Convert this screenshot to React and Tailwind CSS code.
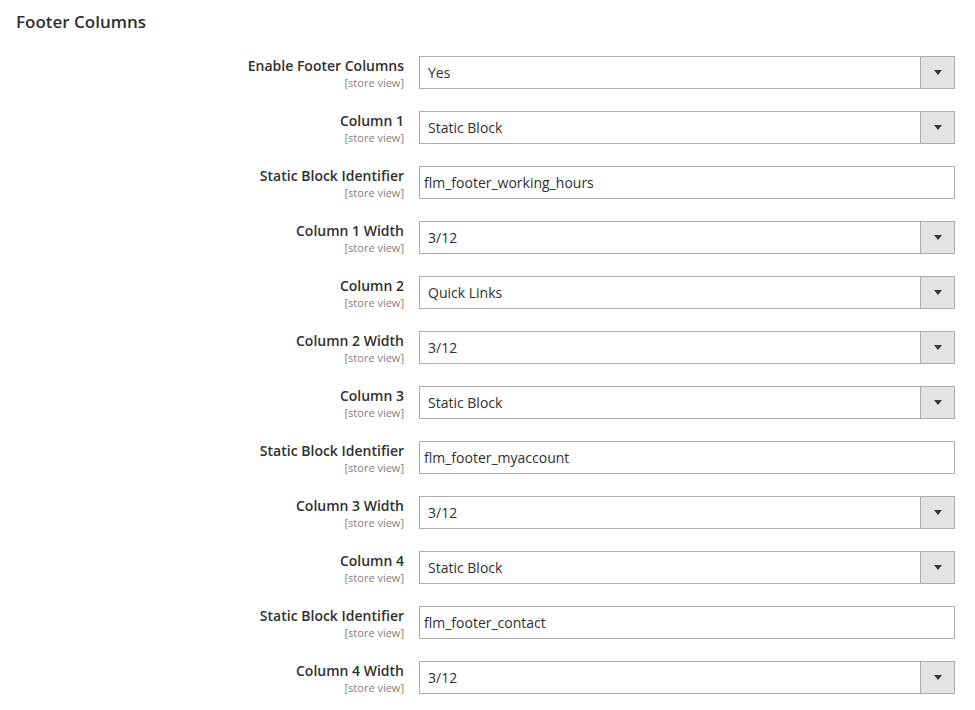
import React from 'react';

const rows = [
  { label: 'Enable Footer Columns', type: 'select', value: 'Yes' },
  { label: 'Column 1', type: 'select', value: 'Static Block' },
  { label: 'Static Block Identifier', type: 'text', value: 'flm_footer_working_hours' },
  { label: 'Column 1 Width', type: 'select', value: '3/12' },
  { label: 'Column 2', type: 'select', value: 'Quick Links' },
  { label: 'Column 2 Width', type: 'select', value: '3/12' },
  { label: 'Column 3', type: 'select', value: 'Static Block' },
  { label: 'Static Block Identifier', type: 'text', value: 'flm_footer_myaccount' },
  { label: 'Column 3 Width', type: 'select', value: '3/12' },
  { label: 'Column 4', type: 'select', value: 'Static Block' },
  { label: 'Static Block Identifier', type: 'text', value: 'flm_footer_contact' },
  { label: 'Column 4 Width', type: 'select', value: '3/12' },
];

function Field({ type, value }) {
  if (type === 'text') {
    return (
      <div className="w-[536px] h-[33px] border border-[#adadad] bg-white flex items-center pl-[4px] text-[14px] text-[#303030]">
        {value}
      </div>
    );
  }
  return (
    <div className="w-[536px] h-[33px] border border-[#adadad] bg-white flex">
      <div className="flex-1 flex items-center pl-[8px] text-[14px] text-[#303030]">{value}</div>
      <div className="w-[34px] border-l border-[#adadad] bg-[#e3e3e3] flex items-center justify-center">
        <span className="block w-0 h-0 border-l-[4px] border-r-[4px] border-t-[5px] border-l-transparent border-r-transparent border-t-[#41362f]" />
      </div>
    </div>
  );
}

export default function App() {
  return (
    <div className="bg-white min-h-[710px] w-[975px] text-[#303030]" style={{ fontFamily: '"Open Sans", "Liberation Sans", sans-serif' }}>
      <h2 className="pl-[16px] pt-[11px] text-[17px] leading-[22px] font-semibold text-[#303030]">Footer Columns</h2>
      <div className="mt-[23px] flex flex-col gap-[22px]">
        {rows.map((r, i) => (
          <div key={i} className="flex h-[33px] items-start">
            <div className="w-[404px] text-right">
              <div className="text-[14px] leading-[19px] font-semibold text-[#303030]">{r.label}</div>
              <div className="text-[11px] leading-[15px] text-[#808080]">[store view]</div>
            </div>
            <div className="ml-[15px]">
              <Field type={r.type} value={r.value} />
            </div>
          </div>
        ))}
      </div>
    </div>
  );
}
